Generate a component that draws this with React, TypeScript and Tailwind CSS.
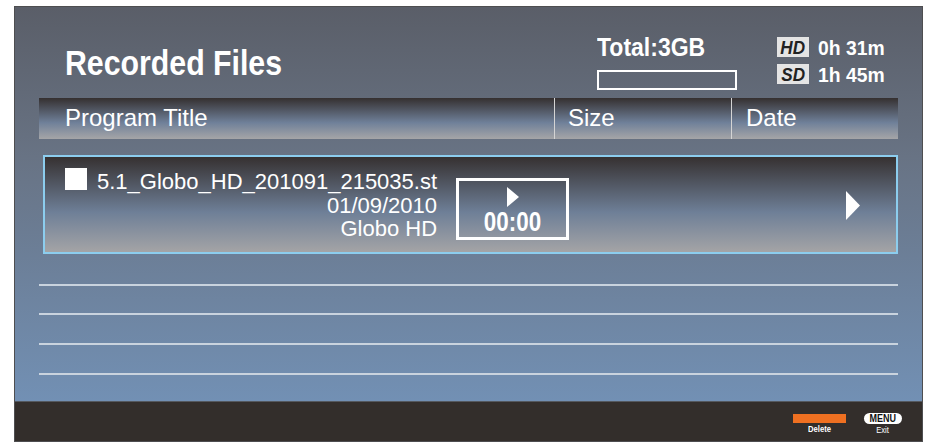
import React from "react";

const F = { fontFamily: '"Liberation Sans", Arial, sans-serif' };

function Line({ mt }: { mt: string }) {
  return <div className={`${mt} mx-[24px] h-[2px] bg-[#c9d3de]`} />;
}

export default function App() {
  return (
    <div className="w-[930px] h-[447px] bg-white pt-[6px] pl-[14px]" style={F}>
      <div className="w-[909px] h-[436px] border border-[#4e4e50] flex flex-col">
        <div className="h-[394px] flex flex-col bg-[linear-gradient(to_bottom,#5a5e68_0%,#687384_38%,#7290b4_100%)]">
          {/* top */}
          <div className="h-[91px] flex items-start text-white">
            <div className="ml-[50px] mt-[38px] w-[400px]">
              <span className="inline-block origin-left scale-x-[0.865] text-[35px] leading-none font-bold whitespace-nowrap">
                Recorded Files
              </span>
            </div>
            <div className="ml-[132px] mt-[28px] flex flex-col">
              <span className="inline-block origin-left scale-x-[0.92] text-[25px] leading-none font-bold whitespace-nowrap">
                Total:3GB
              </span>
              <div className="mt-[10px] w-[140px] h-[20px] border-2 border-white" />
            </div>
            <div className="ml-[40px] mt-[30px] flex flex-col gap-[7px]">
              <div className="flex items-center h-[20px]">
                <div className="w-[32px] h-[20px] bg-[#e4e4e4] flex items-center justify-center">
                  <span className="inline-block scale-x-[0.9] text-[19px] leading-none font-bold italic text-[#222]">HD</span>
                </div>
                <span className="ml-[9px] inline-block origin-left scale-x-[0.92] text-[21px] leading-none font-bold whitespace-nowrap">
                  0h 31m
                </span>
              </div>
              <div className="flex items-center h-[20px]">
                <div className="w-[32px] h-[20px] bg-[#e4e4e4] flex items-center justify-center">
                  <span className="inline-block scale-x-[0.9] text-[19px] leading-none font-bold italic text-[#222]">SD</span>
                </div>
                <span className="ml-[9px] inline-block origin-left scale-x-[0.92] text-[21px] leading-none font-bold whitespace-nowrap">
                  1h 45m
                </span>
              </div>
            </div>
          </div>

          {/* header bar */}
          <div className="mx-[24px] h-[41px] flex text-white text-[24px] leading-none bg-[linear-gradient(to_bottom,#353030_0%,#6f8099_60%,#a5a5a7_100%)]">
            <div className="w-[515px] pl-[26px] pt-[8px]">Program Title</div>
            <div className="w-[1px] bg-[#d4d4d4]" />
            <div className="w-[176px] pl-[13px] pt-[8px]">Size</div>
            <div className="w-[1px] bg-[#d4d4d4]" />
            <div className="flex-1 pl-[14px] pt-[8px]">Date</div>
          </div>

          {/* selected row */}
          <div className="mt-[16px] ml-[28px] mr-[24px] h-[99px] border-2 border-[#8ccdee] flex items-start text-white bg-[linear-gradient(to_bottom,#363131_0%,#6e7f97_58%,#a4a4a6_100%)]">
            <div className="ml-[20px] mt-[11px] w-[22px] h-[22px] bg-white" />
            <div className="ml-[10px] mt-[13px] flex flex-col items-end text-[22px] leading-[23.7px] whitespace-nowrap">
              <span>5.1_Globo_HD_201091_215035.st</span>
              <span>01/09/2010</span>
              <span>Globo HD</span>
            </div>
            <div className="ml-[19px] mt-[21px] w-[113px] h-[62px] border-[3px] border-white flex flex-col items-center">
              <svg className="mt-[6px]" width="12" height="20" viewBox="0 0 12 20">
                <polygon points="0,0 12,10 0,20" fill="white" />
              </svg>
              <span className="mt-[2px] inline-block scale-x-[0.83] text-[27px] leading-none font-bold">00:00</span>
            </div>
            <svg className="ml-auto mr-[36px] mt-[34px]" width="14" height="29" viewBox="0 0 14 29">
              <polygon points="0,0 14,14.5 0,29" fill="white" />
            </svg>
          </div>

          <Line mt="mt-[30px]" />
          <Line mt="mt-[27px]" />
          <Line mt="mt-[28px]" />
          <Line mt="mt-[28px]" />
        </div>

        {/* footer */}
        <div className="h-[40px] bg-[#332e2b] border-t border-[#55595f] flex items-start justify-end text-white">
          <div className="mt-[12px] flex flex-col items-center w-[53px]">
            <div className="w-[53px] h-[9px] bg-[#ef7021]" />
            <span className="mt-[2px] inline-block scale-x-[0.85] text-[9px] leading-none font-bold">Delete</span>
          </div>
          <div className="ml-[18px] mr-[20px] mt-[11px] flex flex-col items-center w-[38px]">
            <div className="w-[38px] h-[11px] rounded-full bg-white flex items-center justify-center">
              <span className="inline-block scale-x-[0.9] text-[10px] leading-none font-bold text-[#111]">MENU</span>
            </div>
            <span className="mt-[2px] inline-block scale-x-[0.85] text-[9px] leading-none">Exit</span>
          </div>
        </div>
      </div>
    </div>
  );
}
